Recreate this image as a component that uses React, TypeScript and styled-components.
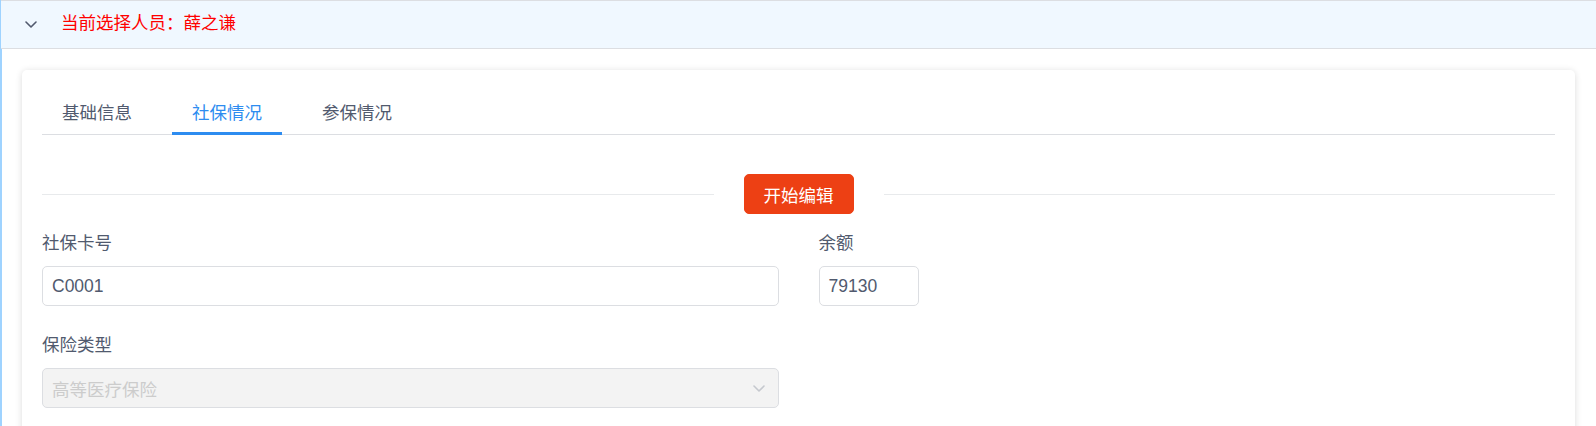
import React from "react";
import styled, { createGlobalStyle } from "styled-components";

const GlobalStyle = createGlobalStyle`
  html, body {
    margin: 0;
    padding: 0;
    background: #fff;
  }
  body {
    font-family: "Liberation Sans", "Noto Sans CJK SC", sans-serif;
    font-size: 17.5px;
    color: #515a6e;
  }
  * {
    box-sizing: border-box;
  }
`;

const Page = styled.div`
  border-left: 1px solid #9fd3ff;
  min-height: 426px;
`;

const Header = styled.div`
  display: flex;
  align-items: center;
  height: 49px;
  background-color: #f0f8ff;
  border-top: 1px solid #dcdee2;
  border-bottom: 1px solid #dcdee2;
  padding-left: 24px;
`;

const HeaderTitle = styled.span`
  margin-left: 24px;
  color: #ff0000;
  font-size: 17.5px;
  line-height: 1;
  padding-bottom: 1px;
`;

const Main = styled.div`
  border-left: 1px solid #9fd3ff;
  padding: 21px 21px 0 20px;
`;

const Card = styled.div`
  background: #fff;
  border-radius: 5px;
  box-shadow: 0 1px 7px rgba(0, 0, 0, 0.14);
  padding: 18px 20px 30px 20px;
`;

const TabNav = styled.div`
  display: flex;
  border-bottom: 1px solid #dcdee2;
  height: 47px;
`;

const Tab = styled.div<{ $active?: boolean }>`
  position: relative;
  display: flex;
  align-items: center;
  height: 46px;
  padding: 0 20px;
  margin-right: 20px;
  font-size: 17.5px;
  color: ${(p) => (p.$active ? "#2d8cf0" : "#515a6e")};
  cursor: pointer;

  &::after {
    content: "";
    display: ${(p) => (p.$active ? "block" : "none")};
    position: absolute;
    left: 0;
    right: 0;
    bottom: -1px;
    height: 3px;
    background: #2d8cf0;
  }
`;

const Divider = styled.div`
  display: flex;
  align-items: center;
  margin: 39px 0 20px 0;

  &::before,
  &::after {
    content: "";
    flex: 1;
    border-top: 1px solid #e8eaec;
  }
`;

const DividerText = styled.div`
  padding: 0 30px;
`;

const EditButton = styled.button`
  height: 40px;
  padding: 0 19px;
  border: 1px solid #ed4014;
  border-radius: 5px;
  background-color: #ed4014;
  color: #fff;
  font-family: inherit;
  font-size: 17.5px;
  cursor: pointer;
`;

const FormGrid = styled.div`
  display: grid;
  grid-template-columns: 1fr 1fr;
  column-gap: 40px;
`;

const FormItem = styled.div`
  margin-bottom: 30px;
`;

const Label = styled.div`
  line-height: 18px;
  font-size: 17.5px;
  color: #515a6e;
  margin-bottom: 14px;
`;

const Input = styled.div<{ $width?: string }>`
  display: flex;
  align-items: center;
  width: ${(p) => p.$width || "100%"};
  height: 40px;
  padding: 0 9px;
  border: 1px solid #dcdee2;
  border-radius: 5px;
  font-size: 17.5px;
  color: #515a6e;
  background: #fff;
`;

const Select = styled.div`
  display: flex;
  align-items: center;
  justify-content: space-between;
  height: 40px;
  padding: 0 13px 0 9px;
  border: 1px solid #dcdee2;
  border-radius: 5px;
  background: #f3f3f3;
  color: #ccc;
  font-size: 17.5px;
`;

function Chevron({ color, size = 12 }: { color: string; size?: number }) {
  return (
    <svg width={size} height={size / 2 + 1} viewBox="0 0 12 7" fill="none">
      <polyline
        points="1,1 6,6 11,1"
        stroke={color}
        strokeWidth="1.6"
        strokeLinecap="round"
        strokeLinejoin="round"
      />
    </svg>
  );
}

export default function App() {
  return (
    <>
      <GlobalStyle />
      <Page>
        <Header>
          <Chevron color="#515a6e" />
          <HeaderTitle>当前选择人员：薛之谦</HeaderTitle>
        </Header>
        <Main>
          <Card>
            <TabNav>
              <Tab>基础信息</Tab>
              <Tab $active>社保情况</Tab>
              <Tab>参保情况</Tab>
            </TabNav>

            <Divider>
              <DividerText>
                <EditButton>开始编辑</EditButton>
              </DividerText>
            </Divider>

            <FormGrid>
              <FormItem>
                <Label>社保卡号</Label>
                <Input>C0001</Input>
              </FormItem>
              <FormItem>
                <Label>余额</Label>
                <Input $width="100px">79130</Input>
              </FormItem>
              <FormItem>
                <Label>保险类型</Label>
                <Select>
                  <span>高等医疗保险</span>
                  <Chevron color="#c5c8ce" />
                </Select>
              </FormItem>
            </FormGrid>
          </Card>
        </Main>
      </Page>
    </>
  );
}
